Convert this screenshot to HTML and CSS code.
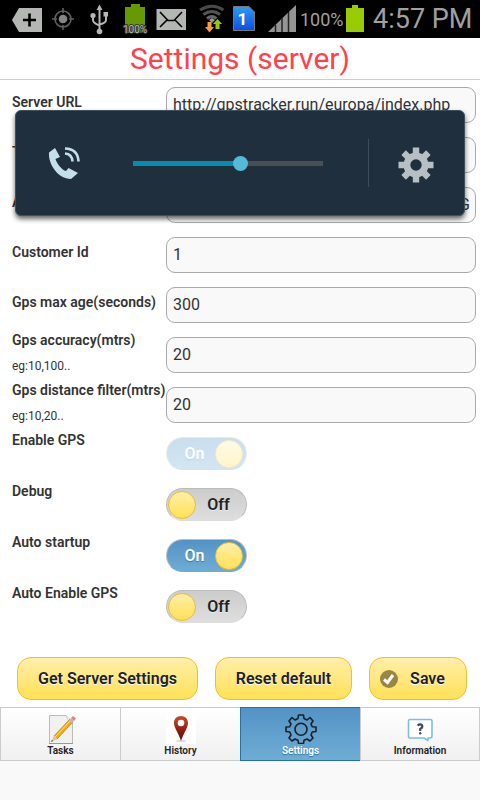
FILE: index.html
```html
<!DOCTYPE html>
<html lang="en">
<head>
<meta charset="utf-8">
<meta name="viewport" content="width=device-width, initial-scale=1">
<title>Settings (server)</title>
<link rel="stylesheet" href="styles.css">
</head>
<body>
<div class="status">
  <svg width="36" height="38" viewBox="0 0 36 38"><path fill="#b4b6b3" d="M7 8H30V32H7L0 20Z"/><path stroke="#000" stroke-width="2.600" d="M11 20H24M17.500 13.500V26.500"/></svg>
  <svg width="32" height="38" viewBox="0 0 32 38"><g fill="none" stroke="#5f5f5f" stroke-width="1.600"><circle cx="11" cy="19" r="8"/><path d="M11 8V13M11 25V30M0 19H5M17 19H22"/></g><circle cx="11" cy="19" r="4.300" fill="#858585"/></svg>
  <svg width="30" height="38" viewBox="0 0 30 38"><g fill="none" stroke="#b4b6b3" stroke-width="2"><path d="M11.500 8V31M5 16V20Q5 23 11.500 25.500M18 15V20Q18 23 11.500 24.500"/></g><g fill="#b4b6b3"><path d="M8.500 10L11.500 4.500L14.500 10ZM15.500 12H20V16.500H15.500Z"/><circle cx="5" cy="15.500" r="2.600"/><circle cx="11.500" cy="31.500" r="2.800"/></g></svg>
  <svg width="30" height="38" viewBox="0 0 30 38"><path fill="#669900" d="M9 4H18V7H23V33H3V7H9Z"/><text x="13" y="33" class="mini" text-anchor="middle">100%</text></svg>
  <svg width="38" height="38" viewBox="0 0 38 38"><path fill="#b4b6b3" d="M0.500 9H30V30H0.500Z"/><path fill="none" stroke="#000" stroke-width="1.600" d="M4 12L12 20.500H18L26 12M4 27L11 20M26 27L19 20"/></svg>
  <svg width="31" height="38" viewBox="0 0 31 38"><g fill="none" stroke-width="3"><path stroke="#494949" d="M2 10Q14 2.500 25.500 10"/><path stroke="#555" d="M5.500 14.500Q14 8.500 22 14.500"/><path stroke="#666" d="M9 18.500Q14 14.500 18.500 18.500"/></g><path fill="#999" d="M11 20L14 23L17 20L14 18Z"/><path fill="#ff9a35" d="M9.500 22H13.500V27H16L11.500 32.500L7 27H9.500Z"/><path fill="#99cc00" d="M17.500 29V24H15L19.500 19L24 24H21.500V29Z"/></svg>
  <svg width="31" height="38" viewBox="0 0 31 38"><defs><linearGradient id="sim" x2="0" y2="1"><stop stop-color="#2e9cf4"/><stop offset="1" stop-color="#0c50e0"/></linearGradient></defs><path fill="url(#sim)" stroke="#777" d="M0.500 6.500H16L21.500 12V30.500H0.500Z"/><text x="9.500" y="25" class="sim" text-anchor="middle">1</text></svg>
  <svg width="28" height="38" viewBox="0 0 28 38"><path fill="#949494" d="M0 32L28 5V32Z"/><path stroke="#222" stroke-width="1.500" d="M7.500 25V32M14 18V32M20.500 12V32"/></svg>
  <span class="percent">100%</span>
  <svg width="23" height="38" viewBox="0 0 23 38"><path fill="#99cc00" d="M6 5H12V8H18V32H0V8H6Z"/></svg>
  <span class="clock">4:57 PM</span>
</div>

<header class="title"><h1>Settings (server)</h1></header>

<main>
  <form class="settings">
    <div class="row"><label for="url">Server URL</label><input id="url" type="text" value="http://gpstracker.run/europa/index.php"></div>
    <div class="row"><label for="tracker">Tracker Id</label><input id="tracker" type="text"></div>
    <div class="row"><label for="api">Api key</label><input id="api" class="end" type="text" value="G"></div>
    <div class="row"><label for="customer">Customer Id</label><input id="customer" type="text" value="1"></div>
    <div class="row"><label for="age">Gps max age(seconds)</label><input id="age" type="text" value="300"></div>
    <div class="row top"><label for="accuracy">Gps accuracy(mtrs)<small>eg:10,100..</small></label><input id="accuracy" type="text" value="20"></div>
    <div class="row top"><label for="distance">Gps distance filter(mtrs)<small>eg:10,20..</small></label><input id="distance" type="text" value="20"></div>
    <div class="row toggle"><label for="gps">Enable GPS</label><span class="switch"><input id="gps" type="checkbox" checked disabled><span class="state">On</span></span></div>
    <div class="row toggle"><label for="debug">Debug</label><span class="switch"><input id="debug" type="checkbox"><span class="state">Off</span></span></div>
    <div class="row toggle"><label for="startup">Auto startup</label><span class="switch"><input id="startup" type="checkbox" checked><span class="state">On</span></span></div>
    <div class="row toggle"><label for="autogps">Auto Enable GPS</label><span class="switch"><input id="autogps" type="checkbox"><span class="state">Off</span></span></div>
    <div class="actions">
      <button type="button">Get Server Settings</button>
      <button type="button">Reset default</button>
      <button type="button" class="save"><svg width="18" height="18" viewBox="0 0 18 18"><circle cx="9" cy="9" r="9" fill="#988744"/><path fill="none" stroke="#fff" stroke-width="3" d="M4 9.500L7.500 12.500L13 5"/></svg>Save</button>
    </div>
  </form>
</main>

<nav class="tabs">
  <a href="#tasks"><svg width="30" height="30" viewBox="0 0 30 30"><path fill="#f1f1f1" stroke="#bbb" d="M3.500 1.500H20L26.500 8V29.500H3.500Z"/><path stroke="#999" d="M3 29.500H27"/><path fill="#fff" stroke="#ccc" d="M20 2Q21 7 26 8"/><path fill="#f3ad15" stroke="#9c6a0c" stroke-width=".6" d="M8 22L24 5L27 8L11 25Z"/><path stroke="#ffe071" d="M9 23L25 6"/><path fill="#e8c594" d="M8 21.500L5 28L11.500 25Z"/><path fill="#333" d="M6 26L5 28L7 27Z"/><path fill="#bbb" d="M23 6L25 4L28 7L26 9Z"/><path fill="#df8775" d="M25 4L27 2L30 4.500L28 7Z"/></svg>Tasks</a>
  <a href="#history"><svg width="30" height="30" viewBox="0 0 30 30"><defs><linearGradient id="pin" x2="0" y2="1"><stop stop-color="#c94c2b"/><stop offset=".6" stop-color="#8b1c10"/><stop offset="1" stop-color="#650c08"/></linearGradient></defs><path fill="#fff" d="M0 0H30V30H0Z"/><ellipse cx="15" cy="27" rx="5" ry="1.200" fill="#ddd"/><path fill="url(#pin)" d="M15 2C10.500 2 8 5 8 9C8 14 13 20 15 27C17 20 22 14 22 9C22 5 19.500 2 15 2Z"/><circle cx="15" cy="9" r="3.300" fill="#fff"/></svg>History</a>
  <a href="#settings" class="active" aria-current="page"><svg width="32" height="30" viewBox="0 0 32 30"><g fill="none" stroke="#17212a" stroke-width="1.600" stroke-linejoin="round"><path d="M13.500 1H18.500L19 4.500L22 6L25 3.500L28 7L26 10L27.200 12.700L31 13V17.500L27.200 18L26 21L28 24L25 27L22 25L19 26.200L18.500 29.500H13.500L13 26.200L10 25L7 27L4 24L6 21L4.800 18L1 17.500V13L4.800 12.700L6 10L4 7L7 3.500L10 6L13 4.500Z"/><circle cx="16" cy="15.300" r="6"/></g></svg>Settings</a>
  <a href="#information"><svg width="30" height="30" viewBox="0 0 30 30"><path fill="#fff" stroke="#7fbde5" stroke-width="1.600" stroke-linejoin="round" d="M5 5.500H25.500Q27 5.500 27 7V22Q27 24 25 24H23V26.500L19 24H5Q3.500 24 3.500 22V7Q3.500 5.500 5 5.500Z"/><path fill="none" stroke="#3e4b60" stroke-width="2.200" d="M12.500 11.500Q15 9.500 17 11.200Q18.200 13.500 15.200 15V17"/><circle cx="15.200" cy="19.200" r="1.200" fill="#3e4b60"/></svg>Information</a>
</nav>

<div class="volume">
  <svg class="phone" width="34" height="34" viewBox="0 0 34 34"><path fill="#c5dfe9" d="M7 2L1 6.500C0 18 10 33 23 33L30 27L20.500 22L18 25C14 24 9 18 7.500 13L12 11Z"/><g fill="none" stroke="#c5dfe9" stroke-width="2.600"><path d="M17 7.500Q24 8 24.500 15.500"/><path d="M17 2.500Q30 3 30.500 15.500"/></g></svg>
  <input type="range" min="0" max="1000" value="571" aria-label="Call volume">
  <button type="button" aria-label="Sound settings"><svg width="36" height="36" viewBox="-18 -18 36 36"><g fill="#b7bfc5"><path id="tooth" d="M-3.200 -17.500H3.200V17.500H-3.200Z"/><use href="#tooth" transform="rotate(45)"/><use href="#tooth" transform="rotate(90)"/><use href="#tooth" transform="rotate(135)"/><circle r="12.500"/></g><circle r="5.700" fill="#1f2f3e"/></svg></button>
</div>
</body>
</html>
```
FILE: styles.css
```css
* { box-sizing: border-box; }
body {
  margin: 0;
  min-height: 100vh;
  background: #f9f9f9;
  color: #333;
  font-family: Roboto, sans-serif;
}
svg { flex: none; }

.status {
  display: flex;
  align-items: center;
  gap: 4px;
  height: 38px;
  padding-left: 12px;
  background: #000;
  color: #a0a0a0;
  white-space: nowrap;
  overflow: hidden;
}
.mini { font-size: 10px; fill: #bbb; stroke: #333; stroke-width: 2px; paint-order: stroke; }
.sim { font-size: 17px; font-weight: 700; fill: #fff; }
.percent { width: 42px; font-size: 18px; }
.clock { font-size: 27px; }

.title {
  height: 42px;
  background: #fff;
  border-bottom: 1px solid #fbd237;
  text-align: center;
}
h1 { margin: 0; font-size: 30px; line-height: 42px; font-weight: 400; color: #ff414b; }

main { background: #fff; }
.row {
  display: grid;
  grid-template-columns: 154px 1fr;
  height: 50px;
  padding: 0 4px 0 12px;
}
label { padding-top: 12px; font-size: 14px; line-height: 20px; font-weight: 600; white-space: nowrap; }
.top label, .toggle label { padding-top: 0; }
small { display: block; margin-top: 6px; font-size: 12px; line-height: 20px; font-weight: 400; }
input[type="text"] {
  width: 100%;
  height: 36px;
  margin: 7px 0;
  padding: 0 5px 2px 6px;
  border: 1px solid #aaa;
  border-radius: 9px;
  background: #f9f9f9;
  color: #333;
  font: 16px Roboto, sans-serif;
}
input.end { text-align: right; }

.toggle { height: 51px; }
.switch {
  position: relative;
  width: 81px;
  height: 33px;
  margin-top: 7px;
}
.switch input {
  appearance: none;
  display: flex;
  align-items: center;
  width: 100%;
  height: 100%;
  margin: 0;
  padding: 0 3px 0 1px;
  border: 1px solid #bbb;
  border-bottom-color: #ddd;
  border-radius: 17px;
  background: linear-gradient(#ccc, #dedede);
}
.switch input::before {
  content: "";
  box-sizing: border-box;
  width: 28px;
  height: 28px;
  border: 1px solid #edbd34;
  border-radius: 50%;
  background: linear-gradient(#ffefaa, #ffe155);
}
.switch input:checked {
  justify-content: flex-end;
  border-bottom-color: #6facd5;
  background: linear-gradient(#5393c5, #6facd5);
}
.state {
  position: absolute;
  inset: 0 0 0 24px;
  font-size: 16px;
  line-height: 33px;
  font-weight: 600;
  text-align: center;
  color: #222;
  text-shadow: 0 1px 0 #eee;
  pointer-events: none;
}
.switch input:checked + .state { inset: 0 24px 0 0; color: #fff; text-shadow: 0 1px 1px #3373a5; }
.switch:has(:disabled) { opacity: 0.3; }

.actions {
  display: grid;
  grid-template-columns: 181fr 137fr 98fr;
  gap: 17px;
  padding: 23px 13px 7px 17px;
}
.actions button {
  display: flex;
  align-items: center;
  justify-content: center;
  height: 43px;
  padding: 0;
  border: 1px solid #edbd34;
  border-radius: 14px;
  background: linear-gradient(#ffefaa, #ffe155);
  color: #222;
  font: 600 16px Roboto, sans-serif;
  text-shadow: 0 1px 0 #fff;
  white-space: nowrap;
}
.actions .save { gap: 12px; padding-right: 11px; }

.tabs { display: grid; grid-template-columns: repeat(4, 1fr); }
.tabs a {
  display: flex;
  flex-direction: column;
  align-items: center;
  height: 54px;
  padding-top: 6px;
  border: 1px solid #ccc;
  border-right: 0;
  background: linear-gradient(#fff, #f0f0f0);
  color: #222;
  font-size: 10px;
  line-height: 13px;
  font-weight: 600;
  text-decoration: none;
}
.tabs a:last-child { border-right: 1px solid #ccc; }
.tabs .active {
  border-color: #2373a5;
  background: linear-gradient(#5393c5, #6facd5);
  color: #fff;
  text-shadow: 0 1px 1px #3373a5;
}

.volume {
  position: absolute;
  top: 110px;
  left: 15px;
  right: 15px;
  display: flex;
  align-items: center;
  height: 106px;
  padding-left: 32px;
  border: 1px solid #40505c;
  border-radius: 6px;
  background: #1f2f3e;
  box-shadow: 0 3px 5px #0009;
}
.volume input {
  appearance: none;
  flex: 1;
  min-width: 0;
  height: 16px;
  margin: 0 45px 0 51px;
  background: linear-gradient(90deg, #078bae 56%, #485056 56%) center / 100% 5px no-repeat;
}
.volume input::-webkit-slider-thumb {
  appearance: none;
  width: 15px;
  height: 15px;
  border-radius: 50%;
  background: #55b9d7;
}
.volume button {
  display: flex;
  align-items: center;
  justify-content: center;
  width: 96px;
  height: 48px;
  padding: 3px 2px 0 0;
  border: 0;
  border-left: 1px solid #404c58;
  background: none;
}
```
